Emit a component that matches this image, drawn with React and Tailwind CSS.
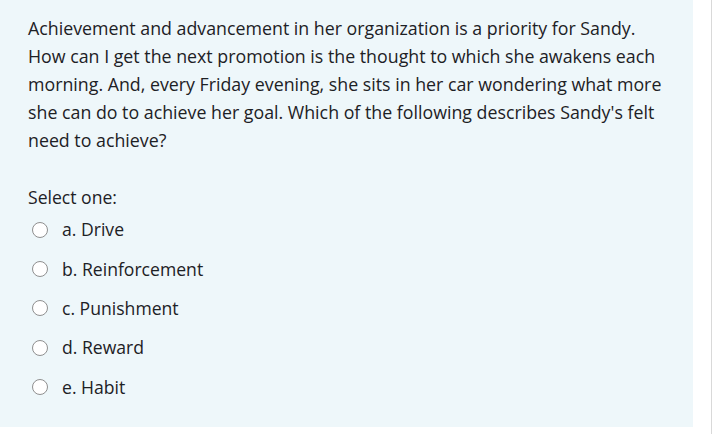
export default function App() {
  const opts = ["a. Drive", "b. Reinforcement", "c. Punishment", "d. Reward", "e. Habit"];
  return (
    <div className="flex w-[719px] h-[434px] bg-white" style={{ fontFamily: '"Open Sans", sans-serif' }}>
      <div className="w-[693px] h-[427px] bg-[#eef7fa] pl-[28px] pt-[14px] text-[#1d2125]">
        <p className="text-[17.8px] leading-[28px] whitespace-nowrap">
          Achievement and advancement in her organization is a priority for Sandy.
          <br />
          How can I get the next promotion is the thought to which she awakens each
          <br />
          morning. And, every Friday evening, she sits in her car wondering what more
          <br />
          she can do to achieve her goal. Which of the following describes Sandy's felt
          <br />
          need to achieve?
        </p>
        <div className="mt-[29px] text-[17.6px] leading-[28px]">Select one:</div>
        <div className="flex flex-col -mt-[1px]">
          {opts.map((o) => (
            <div key={o} className="flex items-center h-[39.3px] pl-[4px]">
              <span className="w-[16px] h-[16px] rounded-full border-[1.5px] border-[#8f8f8f] bg-white shrink-0" />
              <span className="ml-[14px] text-[17.6px]">{o}</span>
            </div>
          ))}
        </div>
      </div>
      <div className="ml-[18px] w-px h-full bg-[#d9d9d9]" />
    </div>
  );
}
